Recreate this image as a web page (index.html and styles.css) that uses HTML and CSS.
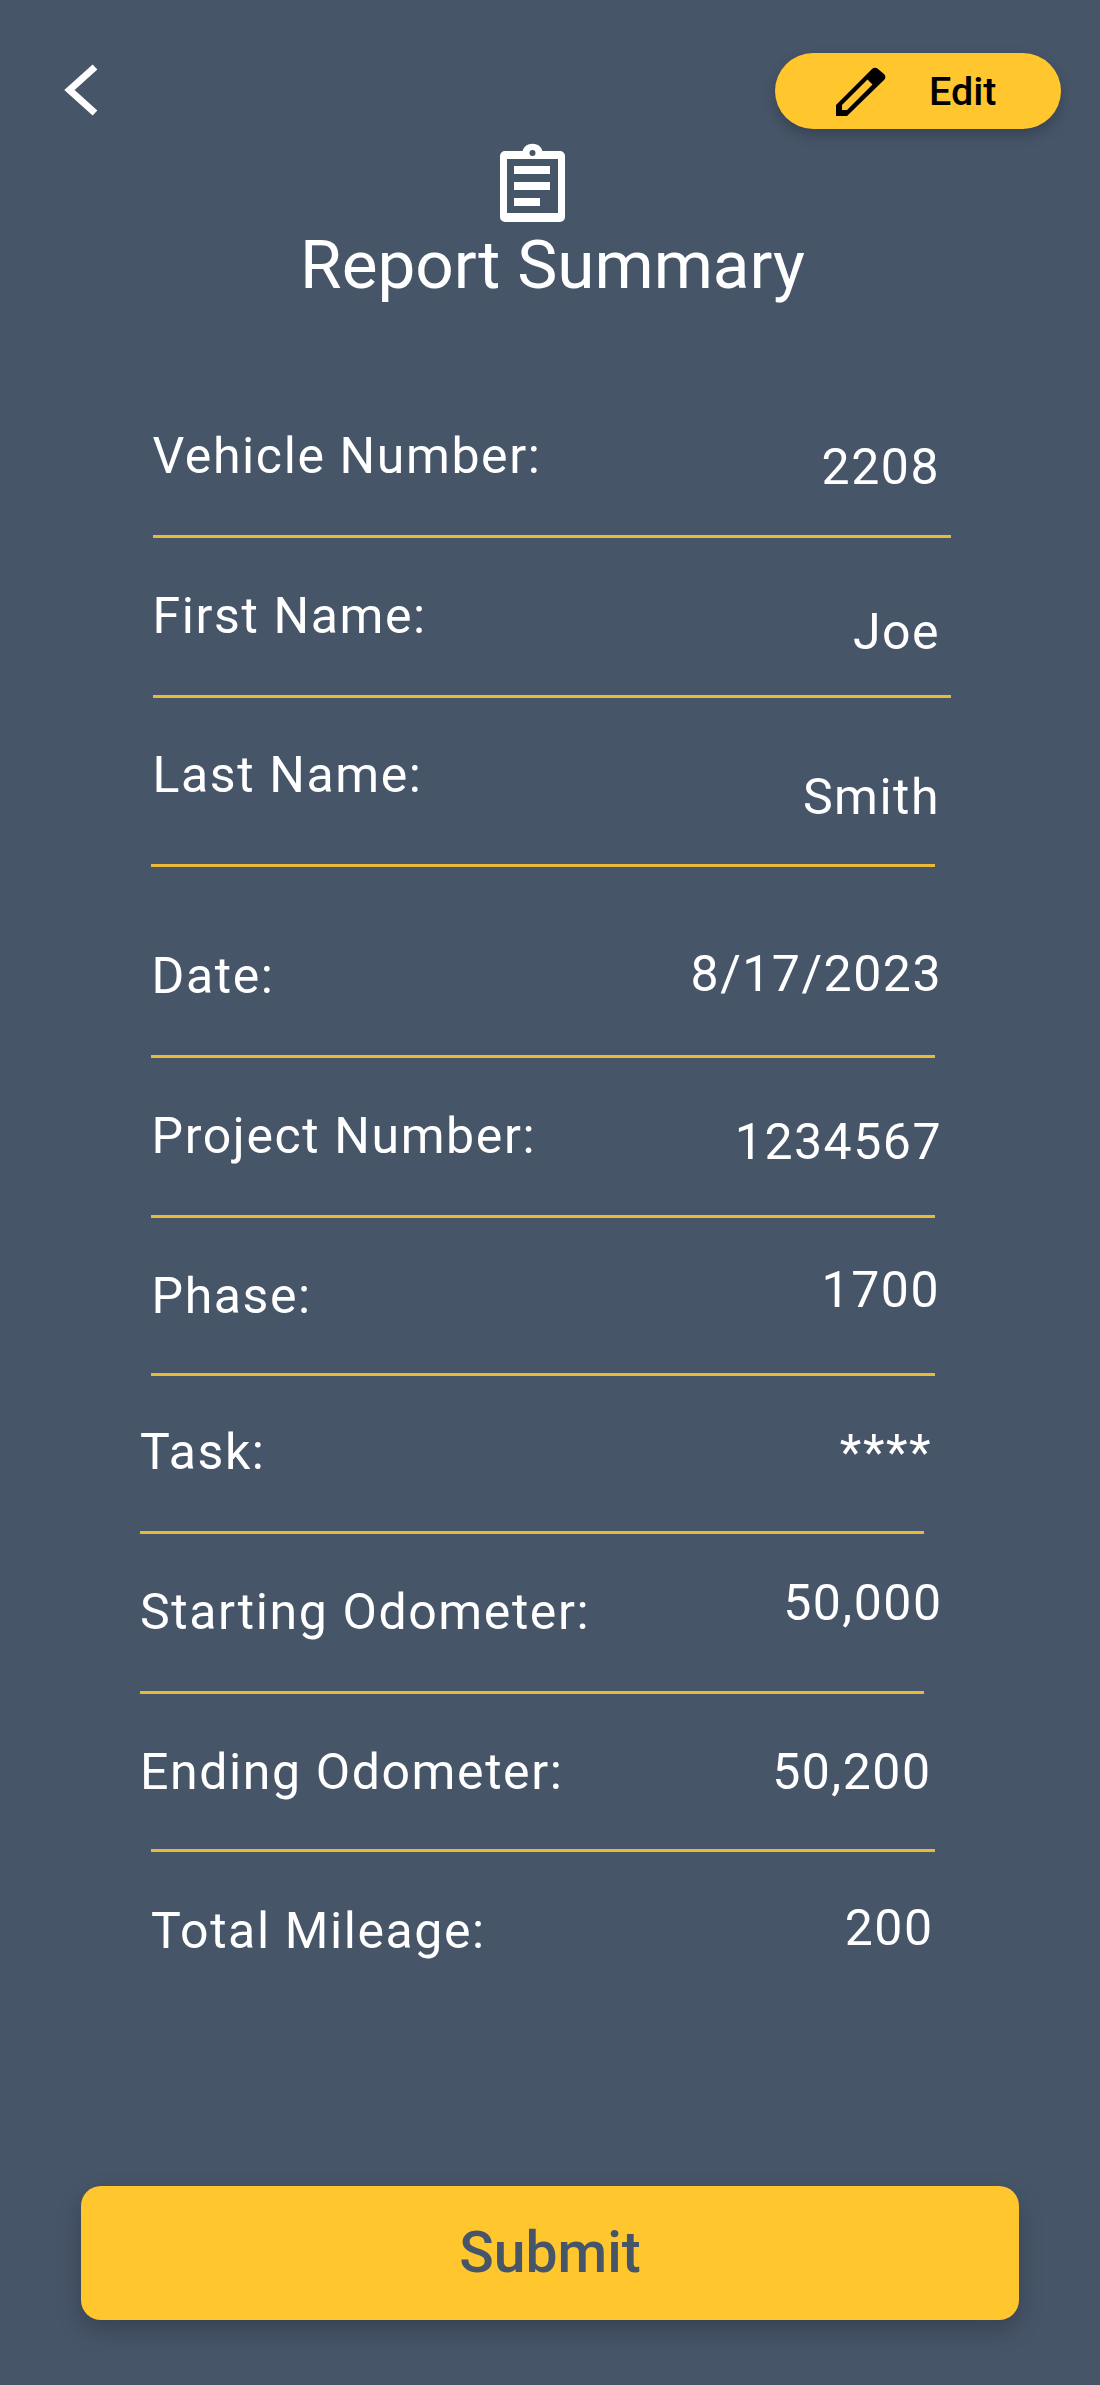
FILE: index.html
```html
<!DOCTYPE html>
<html lang="en">
<head>
<meta charset="utf-8">
<title>Report Summary</title>
<link rel="stylesheet" href="styles.css">
</head>
<body>
<main class="screen">
  <header class="topbar">
    <button class="back" aria-label="Back">
      <svg width="34" height="52" viewBox="0 0 34 52"><path d="M31 3 5.500 26 31 49" fill="none" stroke="#fff" stroke-width="7"/></svg>
    </button>
    <button class="edit">
      <svg class="edit-icon" width="50" height="50" viewBox="0 0 50 50"><path fill="#000" fill-rule="evenodd" d="M0 50V39L36 3a4 4 0 0 1 6 0l6 5a4 4 0 0 1 0 6L11 50ZM31.500 13.500 6 39v5h5L36.500 18.500Z"/></svg>
      <span>Edit</span>
    </button>
  </header>
  <div class="heading">
    <svg width="65" height="79" viewBox="0 0 65 79"><path fill="#fff" fill-rule="evenodd" d="M5 8h17.500a10.500 10.500 0 0 1 20 0H60a5 5 0 0 1 5 5v61a5 5 0 0 1-5 5H5a5 5 0 0 1-5-5V13a5 5 0 0 1 5-5Zm27.500-1a3 3 0 1 0 .01 6 3 3 0 0 0-.01-6ZM7 16v54h51V16Z"/><path fill="#fff" d="M14 23h36v8H14zM14 39h36v8H14zM14 55h26v8H14z"/></svg>
    <h1>Report Summary</h1>
  </div>
  <section class="rows">
    <div class="row r1"><span class="label">Vehicle Number:</span><span class="value">2208</span></div>
    <div class="rule rule-wide"></div>
    <div class="row r2"><span class="label">First Name:</span><span class="value">Joe</span></div>
    <div class="rule rule-wide"></div>
    <div class="row r3"><span class="label">Last Name:</span><span class="value">Smith</span></div>
    <div class="rule rule-mid"></div>
    <div class="row r4"><span class="label">Date:</span><span class="value">8/17/2023</span></div>
    <div class="rule rule-mid"></div>
    <div class="row r5"><span class="label">Project Number:</span><span class="value">1234567</span></div>
    <div class="rule rule-mid"></div>
    <div class="row r6"><span class="label">Phase:</span><span class="value">1700</span></div>
    <div class="rule rule-mid"></div>
    <div class="row r7"><span class="label">Task:</span><span class="value">****</span></div>
    <div class="rule rule-left"></div>
    <div class="row r8"><span class="label">Starting Odometer:</span><span class="value">50,000</span></div>
    <div class="rule rule-left"></div>
    <div class="row r9"><span class="label">Ending Odometer:</span><span class="value">50,200</span></div>
    <div class="rule rule-mid"></div>
    <div class="row r10"><span class="label">Total Mileage:</span><span class="value">200</span></div>
  </section>
  <button class="submit">Submit</button>
</main>
</body>
</html>
```

FILE: styles.css
```css
* { box-sizing: border-box; }
html, body { margin: 0; padding: 0; }
body { background: #475569; font-family: Roboto, "Liberation Sans", sans-serif; color: #fff; }
button { font-family: inherit; border: 0; padding: 0; background: none; }
.screen { width: 1100px; height: 2385px; display: flex; flex-direction: column; overflow: hidden; }

.topbar { display: flex; justify-content: space-between; align-items: flex-start; padding: 53px 39px 0 64px; height: 129px; flex: none; }
.back { height: 73px; display: flex; align-items: center; }
.edit { width: 286px; height: 76px; border-radius: 38px; background: #ffc62e; box-shadow: 0 6px 14px rgba(0,0,0,.22); display: flex; align-items: center; padding-left: 61px; color: #000; font-size: 39.5px; font-weight: 500; }
.edit span { margin-left: 43px; }
.edit-icon { flex: none; }

.heading { display: flex; flex-direction: column; align-items: center; height: 271px; flex: none; padding-left: 5px; }
.heading svg { margin: 14px 40px 0 0; display: block; }
.heading h1 { margin: 4px 0 0; font-size: 67.5px; font-weight: 400; line-height: 78px; }

.rows { display: flex; flex-direction: column; height: 1786px; flex: none; }
.row { display: flex; justify-content: space-between; align-items: flex-start; flex: none; font-size: 50px; line-height: 56px; height: var(--h); margin-left: var(--x); width: var(--w); }
.label { letter-spacing: 1.6px; margin-top: var(--l); }
.value { letter-spacing: 1.5px; margin-top: var(--v); }

.rule { height: 3px; flex: none; background: #e8b93a; }
.rule-wide { margin-left: 153px; width: 798px; }
.rule-mid { margin-left: 151px; width: 784px; }
.rule-left { margin-left: 140px; width: 784px; }

.r1 { --h: 135px; --x: 152.500px; --w: 787.500px; --l: 28px; --v: 39px; }
.r2 { --h: 157px; --x: 152.500px; --w: 787.500px; --l: 50px; --v: 66px; }
.r3 { --h: 166px; --x: 152.500px; --w: 787.500px; --l: 49px; --v: 71px; }
.r4 { --h: 188px; --x: 151.500px; --w: 790.500px; --l: 81px; --v: 79px; }
.r5 { --h: 157px; --x: 151.500px; --w: 790.500px; --l: 50px; --v: 56px; }
.r6 { --h: 155px; --x: 151.500px; --w: 788.500px; --l: 50px; --v: 44px; }
.r7 { --h: 155px; --x: 140px; --w: 792px; --l: 48px; --v: 49px; }
.r8 { --h: 157px; --x: 140px; --w: 802.500px; --l: 50px; --v: 41px; }
.r9 { --h: 155px; --x: 140px; --w: 791.500px; --l: 50px; --v: 50px; }
.r10 { --h: 148px; --x: 151px; --w: 782.500px; --l: 51px; --v: 48px; }

.submit { margin: 0 auto; flex: none; width: 938px; height: 134px; padding-bottom: 2px; border-radius: 20px; background: #ffc62e; box-shadow: 0 10px 24px rgba(0,0,0,.22); color: #475569; font-size: 57px; font-weight: 500; }
```
